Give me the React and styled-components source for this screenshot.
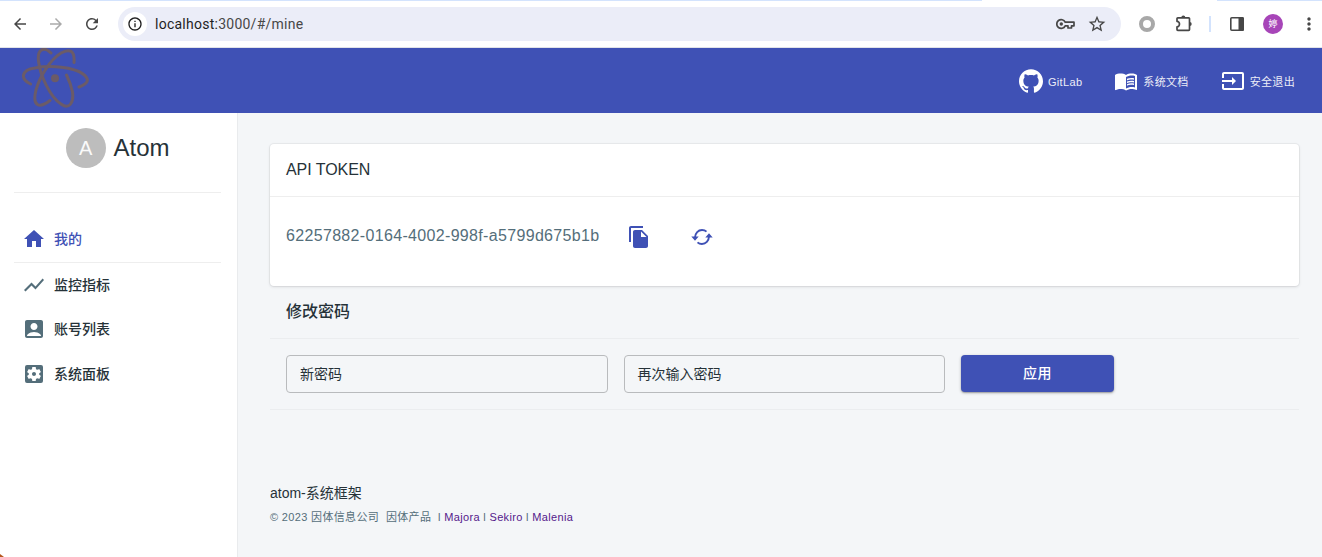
import React from 'react';
import styled, { createGlobalStyle } from 'styled-components';
import { MdHome, MdShowChart, MdAccountBox, MdSettingsApplications, MdMenuBook, MdInput, MdFileCopy, MdArrowBack, MdArrowForward, MdRefresh, MdInfoOutline, MdStarBorder, MdMoreVert } from 'react-icons/md';
import { SiGithub } from 'react-icons/si';

const Global = createGlobalStyle`
  * { box-sizing: border-box; }
  body { margin: 0; background: #f4f6f8; overflow: hidden; font-family: "Liberation Sans", "Noto Sans CJK SC", sans-serif; color: #263238; }
  svg { display: block; flex: none; }
`;
const Page = styled.div`height: 557px; display: flex; flex-direction: column; overflow: hidden; position: relative;`;
const WindowCorner = styled.div`position: absolute; left: 0; bottom: 0; width: 4px; height: 3px; background: #b5561c; clip-path: polygon(0 0, 100% 100%, 0 100%);`;
const TabEdge = styled.div`height: 3px; display: flex; justify-content: space-between; background: #fff;`;
const TabStrip = styled.div`width: ${p => p.$w}px; height: 1px; background: #d3e3fd;`;
const Browser = styled.div`height: 48px; flex: none; background: #fff; border-bottom: 1px solid #e1e3e8;`;
const Toolbar = styled.div`height: 41px; display: flex; align-items: center; padding-left: 11px; color: #474747;`;
const NavIcons = styled.div`display: flex; flex: none; gap: 18px; width: 107px;`;
const Address = styled.div`width: 1003px; flex: none; height: 34px; border-radius: 17px; background: #ebedf8; display: flex; align-items: center; padding: 0 14px 0 5px;`;
const Info = styled.div`width: 24px; height: 24px; border-radius: 50%; background: #fff; display: grid; place-items: center; color: #1f1f1f;`;
const Url = styled.div`flex: 1; margin-left: 8px; font: 14px Roboto, sans-serif; letter-spacing: .25px; color: #474747; b { font-weight: 400; color: #1f1f1f; }`;
const AddressIcons = styled.div`display: flex; align-items: center; gap: 12px;`;
const Ring = styled.div`flex: none; width: 16px; height: 16px; border: 4px solid #a8a8a8; border-radius: 50%; margin: 0 19px 0 18px;`;
const Separator = styled.div`flex: none; width: 2px; height: 16px; background: #d3e3fd; margin: 0 18px 0 15px;`;
const Profile = styled.div`flex: none; width: 20px; height: 20px; border-radius: 50%; background: #a745b8; color: #fff; display: grid; place-items: center; font-size: 9px; margin: 0 16px 0 18px;`;
const Header = styled.header`height: 65px; flex: none; background: #3f51b5; display: flex; align-items: center; justify-content: space-between; padding: 0 27px 0 20px;`;
const HeaderLinks = styled.nav`display: flex; gap: 32px; padding-top: 1px;`;
const HeaderLink = styled.a`display: flex; align-items: center; gap: 5px; color: #fff; font-size: 11px; letter-spacing: .33px; line-height: 20px; span { opacity: .9; padding-top: 2px; }`;
const Body = styled.div`flex: 1; display: flex; min-height: 0;`;
const Sidebar = styled.aside`width: 238px; flex: none; background: #fff; border-right: 1px solid #e9ebed; padding: 15px 16px 0 14px;`;
const User = styled.div`display: flex; align-items: center; justify-content: center; gap: 8px; height: 40px; margin-bottom: 24px; font-size: 24px; letter-spacing: -.06px;`;
const Avatar = styled.div`width: 40px; height: 40px; border-radius: 50%; background: #bdbdbd; color: #fafafa; display: grid; place-items: center; font-size: 20px;`;
const Rule = styled.div`height: 1px; background: #eee;`;
const Menu = styled.div`margin-top: 24px;`;
const MenuItem = styled.div`height: 45px; display: flex; align-items: center; gap: 8px; padding: 0 0 1px 8px; font-size: 14px; font-weight: 500; color: ${p => p.$active ? '#3f51b5' : '#263238'}; svg { color: ${p => p.$active ? '#3f51b5' : '#546e7a'}; } span { padding-bottom: 2px; }`;
const CompactMenuItem = styled(MenuItem)`height: 44px; padding-bottom: 2px;`;
const Main = styled.main`flex: 1; padding: 31px 23px 0 32px;`;
const Card = styled.section`height: 142px; border-radius: 4px; background: #fff; box-shadow: 0 0 0 1px rgba(63,63,68,.05), 0 1px 3px rgba(63,63,68,.15);`;
const CardTitle = styled.div`height: 53px; line-height: 51px; padding-left: 16px; font-size: 16px; letter-spacing: -.05px; border-bottom: 1px solid #eee;`;
const TokenRow = styled.div`height: 80px; padding-left: 16px; display: flex; align-items: center; color: #546e7a; font-size: 16px; letter-spacing: .33px;`;
const Token = styled.span`width: 341px; padding-bottom: 2px;`;
const TokenActions = styled.div`display: flex; gap: 39px; color: #3f51b5;`;
const PasswordTitle = styled.div`height: 53px; line-height: 52px; padding-left: 16px; font-size: 16px; font-weight: 500; border-bottom: 1px solid #ebedef;`;
const Form = styled.div`height: 71px; display: flex; gap: 16px; padding: 16px 16px 0; border-bottom: 1px solid #ebedef;`;
const Field = styled.div`width: 321.5px; height: 38px; border: 1px solid #b9bbbd; border-radius: 4px; padding-left: 13px; line-height: 36px; font-size: 14px;`;
const Apply = styled.button`width: 153px; height: 37px; padding: 0 0 4px; border: 0; border-radius: 4px; background: #3f51b5; color: #fff; font: 500 14px "Liberation Sans", "Noto Sans CJK SC", sans-serif; letter-spacing: .4px; box-shadow: 0 1px 3px rgba(0,0,0,.3), 0 1px 1px rgba(0,0,0,.14);`;
const Footer = styled.footer`margin-top: 73px; font-size: 14px; line-height: 21px;`;
const Copyright = styled.div`margin-top: 4px; font-size: 11px; line-height: 18px; letter-spacing: .34px; color: #546e7a; white-space: pre; a { color: #551a8b; }`;

const Atom = () => (
  <svg width="70" height="65" viewBox="20 48 70 65" fill="none" stroke="#6b5b68" strokeWidth="3" strokeLinecap="round">
    <path d="M30.5 84C20 79 21 70 35 68C50 65 74 67 83 74C91 80 87 84 79 87" />
    <path d="M51 53C44 46 37 49 38.5 61C40 75 50 97 61 104C69 110 74 103 72.5 92C71 85 69 80 66.5 75" />
    <path d="M74 62.5C75 51 70 48 61 53C50 60 40 76 36 90C32 106 39 109 50 100.5" />
    <circle cx="55" cy="78.3" r="4" fill="#6b5b68" stroke="none" />
  </svg>
);
const Sync = () => (
  <svg width="24" height="24" viewBox="0 0 24 24" fill="none" stroke="currentColor" strokeWidth="1.9">
    <path d="M5 12.5C5.2 8 8.2 5 12 5C13.8 5 15.3 5.5 16.5 6.6M19 11.5C18.8 16 15.8 19 12 19C10.2 19 8.7 18.5 7.5 17.4" />
    <path d="M1.3 11.6h7.4L5 15.7zM15.3 12.4h7.4L19 8.3z" fill="currentColor" stroke="none" />
  </svg>
);
const Key = () => (
  <svg width="19" height="20" viewBox="0 0 19 20" fill="none" stroke="currentColor" strokeWidth="1.7" strokeLinejoin="round">
    <path d="M9.2 8.2A4.4 4.4 0 1 0 9.2 11.8H12V14H15.5V11.8H18V8.2Z" />
    <circle cx="5.3" cy="10" r="1.7" fill="currentColor" stroke="none" />
  </svg>
);
const Puzzle = () => (
  <svg width="20" height="20" viewBox="0 0 20 20" fill="none" stroke="currentColor" strokeWidth="1.7" strokeLinejoin="round">
    <path d="M3.8 3.8H14.7Q15.5 3.8 15.5 4.6V15.5Q15.5 16.3 14.7 16.3H3.8Q3 16.3 3 15.5V12.8C6.3 12.8 6.3 7.3 3 7.3V4.6Q3 3.8 3.8 3.8Z" />
    <path d="M7.3 3.5a2 2 0 0 1 4 0zM15.7 8a2 2 0 0 1 0 4z" fill="currentColor" stroke="none" />
  </svg>
);
const Panel = () => (
  <svg width="16" height="16" viewBox="0 0 16 16">
    <rect x="1.8" y="1.8" width="12.4" height="12.4" rx="1" fill="none" stroke="currentColor" strokeWidth="1.6" />
    <path d="M9.5 1h4A1.5 1.5 0 0 1 15 2.5v11a1.5 1.5 0 0 1-1.5 1.5h-4z" fill="currentColor" />
  </svg>
);

export default function App() {
  return (
    <Page>
      <Global />
      <Browser>
        <TabEdge><TabStrip $w={982} /><TabStrip $w={105} /></TabEdge>
        <Toolbar>
          <NavIcons><MdArrowBack size={18} /><MdArrowForward size={18} color="#aaa" /><MdRefresh size={18} /></NavIcons>
          <Address>
            <Info><MdInfoOutline size={16} /></Info>
            <Url><b>localhost:</b>3000/#/mine</Url>
            <AddressIcons><Key /><MdStarBorder size={20} /></AddressIcons>
          </Address>
          <Ring /><Puzzle />
          <Separator /><Panel /><Profile>婷</Profile><MdMoreVert size={20} />
        </Toolbar>
      </Browser>
      <Header>
        <Atom />
        <HeaderLinks>
          <HeaderLink><SiGithub size={24} /><span>GitLab</span></HeaderLink>
          <HeaderLink><MdMenuBook size={24} /><span>系统文档</span></HeaderLink>
          <HeaderLink><MdInput size={24} /><span>安全退出</span></HeaderLink>
        </HeaderLinks>
      </Header>
      <Body>
        <Sidebar>
          <User><Avatar>A</Avatar>Atom</User>
          <Rule />
          <Menu>
            <MenuItem $active><MdHome size={24} /><span>我的</span></MenuItem>
            <Rule />
            <MenuItem><MdShowChart size={24} /><span>监控指标</span></MenuItem>
            <CompactMenuItem><MdAccountBox size={24} /><span>账号列表</span></CompactMenuItem>
            <MenuItem><MdSettingsApplications size={24} /><span>系统面板</span></MenuItem>
          </Menu>
        </Sidebar>
        <Main>
          <Card>
            <CardTitle>API TOKEN</CardTitle>
            <TokenRow>
              <Token>62257882-0164-4002-998f-a5799d675b1b</Token>
              <TokenActions><MdFileCopy size={24} /><Sync /></TokenActions>
            </TokenRow>
          </Card>
          <PasswordTitle>修改密码</PasswordTitle>
          <Form><Field>新密码</Field><Field>再次输入密码</Field><Apply>应用</Apply></Form>
          <Footer>
            atom-系统框架
            <Copyright>© 2023 因体信息公司  因体产品  l <a>Majora</a> l <a>Sekiro</a> l <a>Malenia</a></Copyright>
          </Footer>
        </Main>
      </Body>
      <WindowCorner />
    </Page>
  );
}
